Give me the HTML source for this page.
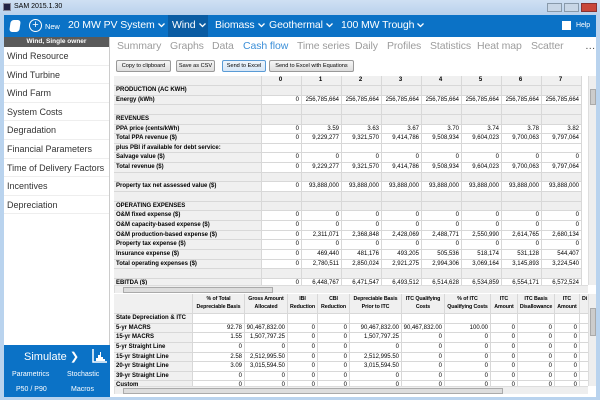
<!DOCTYPE html>
<html><head><meta charset="utf-8"><style>
*{margin:0;padding:0;box-sizing:border-box}
body{width:600px;height:400px;overflow:hidden;background:#b9d3ee;font-family:"Liberation Sans",sans-serif;position:relative}
.a{position:absolute}
.title{left:0;top:0;width:600px;height:15px;background:linear-gradient(#cfe0f3,#b9d1ec);font-size:7px;color:#000}
.bar{left:4px;top:15px;width:592px;height:22px;background:#0b72c6;color:#fff}
.bar span{position:absolute;top:4px;font-size:10.5px;white-space:nowrap;letter-spacing:-0.1px}
.bar svg.c{display:inline-block;vertical-align:middle;margin-left:3px}
.side{left:4px;top:37px;width:106px;height:360px;background:#fff;border-right:1px solid #ccc}
.sh{height:10px;background:#5a5a5a;color:#fff;font-size:6.5px;font-weight:bold;text-align:center;line-height:10px}
.si{height:18.6px;font-size:9px;color:#333;padding-left:3px;line-height:18px;border-bottom:1px solid #eee;white-space:nowrap;overflow:hidden}
.main{left:110px;top:37px;width:486px;height:360px;background:#fff}
.tabs span{position:absolute;top:40px;font-size:10.5px;color:#9c9c9c;white-space:nowrap;letter-spacing:-0.1px}
.btn{position:absolute;top:60px;height:12px;border:1px solid #999;border-radius:2px;background:linear-gradient(#f6f6f6,#ddd);font-size:5.6px;line-height:10px;text-align:center;color:#000;white-space:nowrap;overflow:hidden}
.t{position:absolute;font-size:6px;color:#000}
.r{display:flex;height:9.65px}
.r div{border-right:1px solid #d8d8d8;border-bottom:1px solid #d8d8d8;text-align:right;padding-right:2px;line-height:9px;white-space:nowrap;overflow:hidden;background:#fff}
.r div.l{text-align:left;font-weight:bold;background:#f0f0f0;padding-left:2px}
.r.g div{background:#efefef}
.tt .r div{width:40px;flex:none}
.tt .r div.l{width:148px}
.bt .r div{flex:none}
.hd div{background:#f0f0f0!important;font-weight:bold;text-align:center!important}
.bt .hd div{font-size:5.3px;line-height:7.5px;padding:2px 0 0 0;white-space:normal;letter-spacing:-0.1px}
.sb{background:#eee;border-left:1px solid #ddd}
</style></head><body>
<div class="a title"><div class="a" style="left:3px;top:3px;width:8px;height:8px;background:#224;border:1px solid #889"></div><span class="a" style="left:14px;top:3px">SAM 2015.1.30</span>
<div class="a" style="left:547px;top:3px;width:15px;height:9px;background:#c8d6e6;border:1px solid #8899aa"></div>
<div class="a" style="left:564px;top:3px;width:15px;height:9px;background:#c8d6e6;border:1px solid #8899aa"></div>
<div class="a" style="left:581px;top:3px;width:16px;height:9px;background:#c9473a;border:1px solid #833"></div></div>
<div class="a bar">
<div class="a" style="left:6px;top:5px;width:10px;height:12px;border:1.5px solid #fff;border-radius:3px;background:#fff;transform:skewX(-8deg)"></div>
<div class="a" style="left:25px;top:4px;width:13px;height:13px;border:1.5px solid #fff;border-radius:50%;font-size:11px;line-height:10px;text-align:center">+</div>
<span style="left:41px;top:7px;font-size:7.5px">New</span>
<span style="left:64px">20 MW PV System<svg class="c" width="7" height="5"><path d="M0.5 0.5L3.5 3.5L6.5 0.5" stroke="#fff" fill="none" stroke-width="1.3"/></svg></span>
<div class="a" style="left:164px;top:0;width:40px;height:22px;background:#0a5ca3"></div>
<span style="left:168px">Wind<svg class="c" width="7" height="5"><path d="M0.5 0.5L3.5 3.5L6.5 0.5" stroke="#fff" fill="none" stroke-width="1.3"/></svg></span>
<span style="left:211px">Biomass<svg class="c" width="7" height="5"><path d="M0.5 0.5L3.5 3.5L6.5 0.5" stroke="#fff" fill="none" stroke-width="1.3"/></svg></span>
<span style="left:265px">Geothermal<svg class="c" width="7" height="5"><path d="M0.5 0.5L3.5 3.5L6.5 0.5" stroke="#fff" fill="none" stroke-width="1.3"/></svg></span>
<span style="left:337px">100 MW Trough<svg class="c" width="7" height="5"><path d="M0.5 0.5L3.5 3.5L6.5 0.5" stroke="#fff" fill="none" stroke-width="1.3"/></svg></span>
<div class="a" style="left:558px;top:6px;width:9px;height:9px;background:#fff"></div>
<span style="left:572px;top:7px;font-size:7px">Help</span>
</div>
<div class="a side"><div class="sh">Wind, Single owner</div>
<div class="si">Wind Resource</div><div class="si">Wind Turbine</div><div class="si">Wind Farm</div><div class="si">System Costs</div><div class="si">Degradation</div><div class="si">Financial Parameters</div><div class="si">Time of Delivery Factors</div><div class="si">Incentives</div><div class="si">Depreciation</div>
<div class="a" style="left:0;top:308px;width:106px;height:52px;background:#0b72c6;color:#fff">
<span class="a" style="left:20px;top:5px;font-size:11px">Simulate ❯</span>
<svg class="a" style="left:88px;top:4px" width="16" height="14"><path d="M1 0V13H15" stroke="#fff" fill="none" stroke-width="1.5"/><path d="M4 12V9H6V6H8V3H9V8H11V10H13V12Z" fill="#fff"/></svg>
<span class="a" style="left:8px;top:26px;font-size:7px">Parametrics</span><span class="a" style="left:63px;top:26px;font-size:7px">Stochastic</span>
<span class="a" style="left:12px;top:41px;font-size:7px">P50 / P90</span><span class="a" style="left:67px;top:41px;font-size:7px">Macros</span></div>
</div>
<div class="a main"></div>
<div class="tabs"><span style="left:117px">Summary</span><span style="left:170px">Graphs</span><span style="left:212px">Data</span><span style="left:243px;color:#3b8fd8">Cash flow</span><span style="left:297px">Time series</span><span style="left:355px">Daily</span><span style="left:387px">Profiles</span><span style="left:430px">Statistics</span><span style="left:477px">Heat map</span><span style="left:531px">Scatter</span><span style="left:585px;color:#444">…</span></div>
<div class="btn" style="left:116px;width:55px">Copy to clipboard</div>
<div class="btn" style="left:176px;width:39px">Save as CSV</div>
<div class="btn" style="left:222px;width:44px;border-color:#5a9bd5;background:linear-gradient(#eef5fc,#d6e6f6)">Send to Excel</div>
<div class="btn" style="left:269px;width:85px">Send to Excel with Equations</div>

<div class="t tt" style="left:114px;top:76px;width:474px;height:209px;overflow:hidden">
<div class="r hd" style="height:10px"><div class="l"></div><div>0</div><div>1</div><div>2</div><div>3</div><div>4</div><div>5</div><div>6</div><div>7</div></div>
<div class="r g"><div class="l">PRODUCTION (AC KWH)</div><div></div><div></div><div></div><div></div><div></div><div></div><div></div><div></div></div>
<div class="r"><div class="l">Energy (kWh)</div><div>0</div><div>256,785,664</div><div>256,785,664</div><div>256,785,664</div><div>256,785,664</div><div>256,785,664</div><div>256,785,664</div><div>256,785,664</div></div>
<div class="r g"><div class="l"></div><div></div><div></div><div></div><div></div><div></div><div></div><div></div><div></div></div>
<div class="r g"><div class="l">REVENUES</div><div></div><div></div><div></div><div></div><div></div><div></div><div></div><div></div></div>
<div class="r"><div class="l">PPA price (cents/kWh)</div><div>0</div><div>3.59</div><div>3.63</div><div>3.67</div><div>3.70</div><div>3.74</div><div>3.78</div><div>3.82</div></div>
<div class="r"><div class="l">Total PPA revenue ($)</div><div>0</div><div>9,229,277</div><div>9,321,570</div><div>9,414,786</div><div>9,508,934</div><div>9,604,023</div><div>9,700,063</div><div>9,797,064</div></div>
<div class="r"><div class="l">plus PBI if available for debt service:</div><div></div><div></div><div></div><div></div><div></div><div></div><div></div><div></div></div>
<div class="r"><div class="l">Salvage value ($)</div><div>0</div><div>0</div><div>0</div><div>0</div><div>0</div><div>0</div><div>0</div><div>0</div></div>
<div class="r"><div class="l">Total revenue ($)</div><div>0</div><div>9,229,277</div><div>9,321,570</div><div>9,414,786</div><div>9,508,934</div><div>9,604,023</div><div>9,700,063</div><div>9,797,064</div></div>
<div class="r g"><div class="l"></div><div></div><div></div><div></div><div></div><div></div><div></div><div></div><div></div></div>
<div class="r"><div class="l">Property tax net assessed value ($)</div><div>0</div><div>93,888,000</div><div>93,888,000</div><div>93,888,000</div><div>93,888,000</div><div>93,888,000</div><div>93,888,000</div><div>93,888,000</div></div>
<div class="r g"><div class="l"></div><div></div><div></div><div></div><div></div><div></div><div></div><div></div><div></div></div>
<div class="r g"><div class="l">OPERATING EXPENSES</div><div></div><div></div><div></div><div></div><div></div><div></div><div></div><div></div></div>
<div class="r"><div class="l">O&amp;M fixed expense ($)</div><div>0</div><div>0</div><div>0</div><div>0</div><div>0</div><div>0</div><div>0</div><div>0</div></div>
<div class="r"><div class="l">O&amp;M capacity-based expense ($)</div><div>0</div><div>0</div><div>0</div><div>0</div><div>0</div><div>0</div><div>0</div><div>0</div></div>
<div class="r"><div class="l">O&amp;M production-based expense ($)</div><div>0</div><div>2,311,071</div><div>2,368,848</div><div>2,428,069</div><div>2,488,771</div><div>2,550,990</div><div>2,614,765</div><div>2,680,134</div></div>
<div class="r"><div class="l">Property tax expense ($)</div><div>0</div><div>0</div><div>0</div><div>0</div><div>0</div><div>0</div><div>0</div><div>0</div></div>
<div class="r"><div class="l">Insurance expense ($)</div><div>0</div><div>469,440</div><div>481,176</div><div>493,205</div><div>505,536</div><div>518,174</div><div>531,128</div><div>544,407</div></div>
<div class="r"><div class="l">Total operating expenses ($)</div><div>0</div><div>2,780,511</div><div>2,850,024</div><div>2,921,275</div><div>2,994,306</div><div>3,069,164</div><div>3,145,893</div><div>3,224,540</div></div>
<div class="r g"><div class="l"></div><div></div><div></div><div></div><div></div><div></div><div></div><div></div><div></div></div>
<div class="r"><div class="l">EBITDA ($)</div><div>0</div><div>6,448,767</div><div>6,471,547</div><div>6,493,512</div><div>6,514,628</div><div>6,534,859</div><div>6,554,171</div><div>6,572,524</div></div>
</div>
<div class="a sb" style="left:588px;top:76px;width:8px;height:209px"><div class="a" style="left:1px;top:13px;width:6px;height:16px;background:#ccc;border:1px solid #aaa"></div></div>
<div class="a sb" style="left:114px;top:285px;width:474px;height:8px;border-top:1px solid #ddd"><div class="a" style="left:8px;top:1px;width:150px;height:6px;background:#ddd;border:1px solid #aaa"></div></div>

<div class="t bt" style="left:114px;top:294px;width:474px;height:92px;overflow:hidden">
<div class="r hd" style="height:20px"><div class="l" style="width:79px"></div><div style="width:52px">% of Total Depreciable Basis</div><div style="width:43px">Gross Amount Allocated</div><div style="width:30px">IBI Reduction</div><div style="width:32px">CBI Reduction</div><div style="width:52px">Depreciable Basis Prior to ITC</div><div style="width:43px">ITC Qualifying Costs</div><div style="width:46px">% of ITC Qualifying Costs</div><div style="width:27px">ITC Amount</div><div style="width:37px">ITC Basis Disallowance</div><div style="width:25px">ITC Amount</div><div style="width:10px">Di</div></div>
<div class="r"><div class="l" style="width:79px">State Depreciation &amp; ITC</div><div style="width:52px"></div><div style="width:43px"></div><div style="width:30px"></div><div style="width:32px"></div><div style="width:52px"></div><div style="width:43px"></div><div style="width:46px"></div><div style="width:27px"></div><div style="width:37px"></div><div style="width:25px"></div><div style="width:10px"></div></div>
<div class="r"><div class="l" style="width:79px">5-yr MACRS</div><div style="width:52px">92.78</div><div style="width:43px">90,467,832.00</div><div style="width:30px">0</div><div style="width:32px">0</div><div style="width:52px">90,467,832.00</div><div style="width:43px">90,467,832.00</div><div style="width:46px">100.00</div><div style="width:27px">0</div><div style="width:37px">0</div><div style="width:25px">0</div><div style="width:10px"></div></div>
<div class="r"><div class="l" style="width:79px">15-yr MACRS</div><div style="width:52px">1.55</div><div style="width:43px">1,507,797.25</div><div style="width:30px">0</div><div style="width:32px">0</div><div style="width:52px">1,507,797.25</div><div style="width:43px">0</div><div style="width:46px">0</div><div style="width:27px">0</div><div style="width:37px">0</div><div style="width:25px">0</div><div style="width:10px"></div></div>
<div class="r"><div class="l" style="width:79px">5-yr Straight Line</div><div style="width:52px">0</div><div style="width:43px">0</div><div style="width:30px">0</div><div style="width:32px">0</div><div style="width:52px">0</div><div style="width:43px">0</div><div style="width:46px">0</div><div style="width:27px">0</div><div style="width:37px">0</div><div style="width:25px">0</div><div style="width:10px"></div></div>
<div class="r"><div class="l" style="width:79px">15-yr Straight Line</div><div style="width:52px">2.58</div><div style="width:43px">2,512,995.50</div><div style="width:30px">0</div><div style="width:32px">0</div><div style="width:52px">2,512,995.50</div><div style="width:43px">0</div><div style="width:46px">0</div><div style="width:27px">0</div><div style="width:37px">0</div><div style="width:25px">0</div><div style="width:10px"></div></div>
<div class="r"><div class="l" style="width:79px">20-yr Straight Line</div><div style="width:52px">3.09</div><div style="width:43px">3,015,594.50</div><div style="width:30px">0</div><div style="width:32px">0</div><div style="width:52px">3,015,594.50</div><div style="width:43px">0</div><div style="width:46px">0</div><div style="width:27px">0</div><div style="width:37px">0</div><div style="width:25px">0</div><div style="width:10px"></div></div>
<div class="r"><div class="l" style="width:79px">39-yr Straight Line</div><div style="width:52px">0</div><div style="width:43px">0</div><div style="width:30px">0</div><div style="width:32px">0</div><div style="width:52px">0</div><div style="width:43px">0</div><div style="width:46px">0</div><div style="width:27px">0</div><div style="width:37px">0</div><div style="width:25px">0</div><div style="width:10px"></div></div>
<div class="r"><div class="l" style="width:79px">Custom</div><div style="width:52px">0</div><div style="width:43px">0</div><div style="width:30px">0</div><div style="width:32px">0</div><div style="width:52px">0</div><div style="width:43px">0</div><div style="width:46px">0</div><div style="width:27px">0</div><div style="width:37px">0</div><div style="width:25px">0</div><div style="width:10px"></div></div>
</div>
<div class="a sb" style="left:588px;top:294px;width:8px;height:92px"><div class="a" style="left:1px;top:14px;width:6px;height:28px;background:#ccc;border:1px solid #aaa"></div></div>
<div class="a sb" style="left:114px;top:386px;width:474px;height:8px;border-top:1px solid #ddd"><div class="a" style="left:8px;top:1px;width:380px;height:6px;background:#ddd;border:1px solid #aaa"></div></div>
</body></html>
